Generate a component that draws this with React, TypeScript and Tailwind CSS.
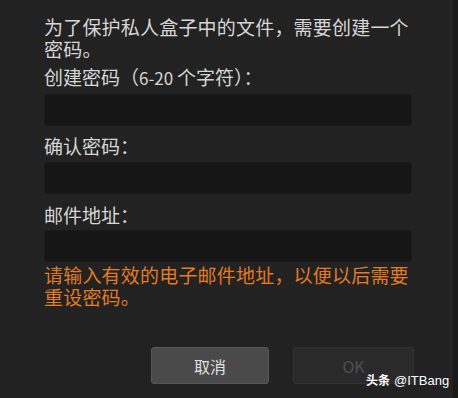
import React from "react";

export default function App() {
  const font = { fontFamily: '"Noto Sans CJK SC", "Noto Sans", sans-serif' };
  return (
    <div className="relative w-[458px] h-[398px] bg-[#222222] overflow-hidden flex" style={font}>
      <div className="flex-1 flex flex-col pl-[44px] pt-[16px] pr-[39px]">
        <div className="text-[19px] leading-[22px] text-[#d6d6d6] tracking-[0.2px]">
          为了保护私人盒子中的文件，需要创建一个密码。
        </div>
        <div className="mt-[6px] text-[19px] leading-[22px] text-[#d6d6d6]">
          创建密码（<span className="text-[17px]">6-20 </span>个字符）：
        </div>
        <div className="mt-[5px] h-[32px] w-[368px] rounded-[3px] bg-[#161616] border border-[#1c1c1c]" />
        <div className="mt-[9px] text-[19px] leading-[22px] text-[#d6d6d6]">确认密码：</div>
        <div className="mt-[5px] h-[32px] w-[368px] rounded-[3px] bg-[#161616] border border-[#1c1c1c]" />
        <div className="mt-[10px] text-[19px] leading-[22px] text-[#d6d6d6]">邮件地址：</div>
        <div className="mt-[4px] h-[32px] w-[368px] rounded-[3px] bg-[#161616] border border-[#1c1c1c]" />
        <div className="mt-[2px] text-[19px] leading-[22px] text-[#e27b22] tracking-[0.2px]">
          请输入有效的电子邮件地址，以便以后需要重设密码。
        </div>
        <div className="mt-[39px] flex justify-end gap-[24px] w-[370px]">
          <div className="w-[118px] h-[37px] rounded-[3px] bg-[#4a4a4a] border border-[#575757] flex items-center justify-center text-[16px] text-[#e0e0e0]">
            取消
          </div>
          <div className="w-[121px] h-[37px] rounded-[3px] bg-[#2a2a2a] border border-[#333333] flex items-center justify-center text-[16px] text-[#505050]">
            OK
          </div>
        </div>
      </div>
      <div className="w-[6px] bg-[#1a1a1a]" />
      <div className="absolute left-[366px] top-[371px] leading-[18px] text-white flex items-baseline">
        <span className="font-bold text-[12px]">头条</span>
        <span className="text-[13px] ml-[4px]" style={{ fontFamily: '"Liberation Sans", sans-serif' }}>@ITBang</span>
      </div>
    </div>
  );
}
